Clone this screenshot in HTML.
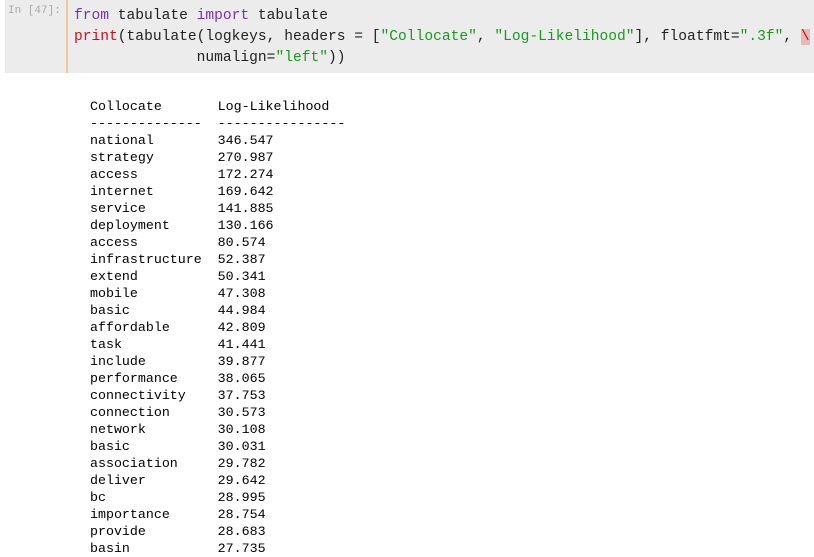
<!DOCTYPE html>
<html><head><meta charset="utf-8"><style>
body{margin:0;width:814px;height:554px;background:#fff;overflow:hidden;position:relative;font-family:"Liberation Mono",monospace}
.box{position:absolute;left:5px;top:0;width:809px;height:73px;background:#ececec}
.prompt{position:absolute;left:8px;top:5px;font-size:11px;color:#aaa;}
.bar{position:absolute;left:66px;top:0;width:2px;height:73px;background:#f3c89a}
pre{margin:0;position:absolute;white-space:pre}
.code{left:74px;top:6px;font-size:14.6px;line-height:21px;color:#222}
.k{color:#7b2fb5}.p{color:#c5121f}.s{color:#1a9a1a}
.bs{background:#e6b9b9;color:#d00}
.out{left:90px;top:98px;font-size:13.3px;line-height:17px;color:#000}
</style></head><body>
<div class="box"></div><div class="bar"></div>
<div class="prompt">In [47]:</div>
<pre class="code"><span class="k">from</span> tabulate <span class="k">import</span> tabulate
<span class="p">print</span>(tabulate(logkeys, headers = [<span class="s">"Collocate"</span>, <span class="s">"Log-Likelihood"</span>], floatfmt=<span class="s">".3f"</span>, <span class="bs">\</span>
              numalign=<span class="s">"left"</span>))</pre>
<pre class="out">Collocate       Log-Likelihood
--------------  ----------------
national        346.547
strategy        270.987
access          172.274
internet        169.642
service         141.885
deployment      130.166
access          80.574
infrastructure  52.387
extend          50.341
mobile          47.308
basic           44.984
affordable      42.809
task            41.441
include         39.877
performance     38.065
connectivity    37.753
connection      30.573
network         30.108
basic           30.031
association     29.782
deliver         29.642
bc              28.995
importance      28.754
provide         28.683
basin           27.735</pre>
</body></html>
